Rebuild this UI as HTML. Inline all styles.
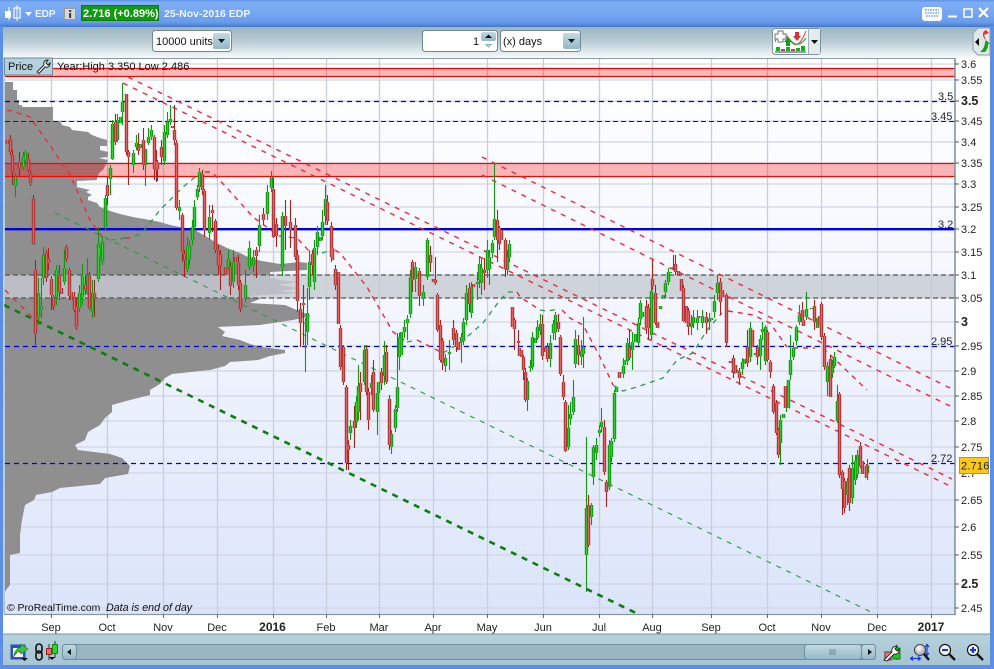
<!DOCTYPE html>
<html><head><meta charset="utf-8"><title>EDP</title>
<style>
html,body{margin:0;padding:0;background:#5b8fe6;overflow:hidden}
svg{display:block;font-family:"Liberation Sans",Arial,sans-serif}
</style></head><body>
<svg xmlns="http://www.w3.org/2000/svg" width="994" height="669" viewBox="0 0 994 669">
<defs>
<linearGradient id="tb" x1="0" y1="0" x2="0" y2="1"><stop offset="0" stop-color="#5f92e6"/><stop offset=".1" stop-color="#7fb0f6"/><stop offset=".85" stop-color="#6a9cec"/><stop offset="1" stop-color="#4d7fd2"/></linearGradient>
<linearGradient id="tool" x1="0" y1="0" x2="0" y2="1"><stop offset="0" stop-color="#98b3bf"/><stop offset=".5" stop-color="#bccdd5"/><stop offset="1" stop-color="#f8fafb"/></linearGradient>
<linearGradient id="bg" x1="0" y1="0" x2="0" y2="1"><stop offset="0" stop-color="#ffffff"/><stop offset=".45" stop-color="#f3f6fe"/><stop offset="1" stop-color="#dbe4fa"/></linearGradient>
<linearGradient id="bot" x1="0" y1="0" x2="0" y2="1"><stop offset="0" stop-color="#b5d1dc"/><stop offset="1" stop-color="#a6c5d2"/></linearGradient>
<linearGradient id="btn" x1="0" y1="0" x2="0" y2="1"><stop offset="0" stop-color="#c2d9e2"/><stop offset="1" stop-color="#94b8c7"/></linearGradient>
<radialGradient id="lens" cx=".4" cy=".35" r=".7"><stop offset="0" stop-color="#fff"/><stop offset="1" stop-color="#999"/></radialGradient>
<path id="gb" d="M15 177V186M23 157V167M25 152V160M38 293V318M41 307V310M43 255V278M56 270V297M64 268V282M79 293V308M82 276V297M87 276V293M92 293V312M98 244V279M99 248V255M102 242V262M105 198V227M110 168V179M112 124V159M117 120V140M120 117V123M122 102V112M133 153V165M136 143V147M140 144V148M145 149V165M148 137V143M151 130V137M164 132V161M167 122V135M170 119V122M179 207V211M187 246V269M189 245V259M192 227V240M194 207V227M197 189V197M199 172V187M209 217V233M228 259V267M233 262V282M245 285V298M249 248V267M253 257V265M259 225V246M267 192V214M271 177V188M282 216V267M305 323V324M307 313V332M309 262V287M314 248V282M317 232V247M320 237V241M322 222V236M325 199V216M350 426V433M356 402V422M358 386V412M364 350V382M371 383V388M377 393V412M378 382V393M384 355V376M391 434V447M395 409V428M397 387V408M399 337V357M401 332V355M404 327V332M407 319V323M410 277V314M415 267V279M423 292V298M427 240V277M445 358V366M449 352V354M461 337V342M463 322V341M466 293V320M471 287V313M477 282V284M479 264V280M481 268V283M487 250V270M489 257V269M492 243V253M494 219V237M507 257V270M509 244V257M527 381V400M530 366V368M532 337V367M535 338V343M537 327V338M540 324V331M550 343V359M553 324V333M555 315V332M568 428V447M570 414V419M573 397V412M575 339V364M581 351V357M583 347V354M586 508V555M591 505V517M593 447V477M596 445V453M599 430V433M601 422V427M609 445V487M611 441V457M614 393V439M616 387V392M623 366V374M624 360V365M627 343V361M632 342V350M635 334V342M638 323V343M640 303V319M642 312V317M651 291V335M660 306V309M663 295V298M665 283V292M668 272V282M670 272V273M691 323V327M693 317V323M697 318V323M702 316V323M709 319V322M711 318V320M714 301V312M717 283V293M738 370V372M742 362V369M744 359V364M750 328V357M755 353V355M760 339V356M762 329V332M765 327V361M780 420V443M783 414V418M786 394V406M788 380V408M790 360V375M793 348V357M796 327V341M799 315V322M806 309V317M811 308V309M817 318V328M827 366V382M832 366V373M834 357V366M837 401V421M847 481V495M852 468V498M855 461V480M857 455V474M867 465V473"/>
<path id="rb" d="M7 140V144M10 139V152M12 155V171M19 162V169M28 159V169M30 174V183M33 199V244M35 270V334M46 253V278M48 259V263M51 279V295M53 297V307M59 275V292M61 288V294M66 247V259M69 270V296M71 292V300M74 297V310M76 307V327M85 285V290M89 275V308M94 293V298M107 185V196M115 122V142M126 94V152M128 152V157M138 146V151M143 140V165M154 137V169M156 161V170M157 163V169M161 147V157M172 126V128M174 130V140M176 143V208M182 215V252M184 254V260M202 174V190M204 191V230M212 210V213M215 221V250M218 250V265M220 255V266M225 267V275M230 267V286M235 257V262M238 263V285M240 283V309M256 250V256M263 214V220M273 189V237M276 224V236M285 216V226M290 222V230M295 225V257M297 255V301M300 309V323M303 303V305M312 254V265M327 202V221M331 226V257M332 248V260M335 269V285M338 272V324M340 328V367M343 347V382M346 387V463M348 445V450M354 421V428M360 383V392M366 349V392M368 392V420M373 372V410M381 372V383M386 352V382M389 399V445M412 262V280M419 271V296M430 255V263M433 279V282M435 280V283M437 295V330M440 325V360M442 341V363M453 328V340M456 333V347M458 342V350M469 288V304M473 284V287M484 270V273M497 220V240M499 228V244M501 230V240M505 240V269M512 307V327M514 320V329M518 341V343M519 348V356M521 350V357M523 357V370M525 372V400M542 324V356M545 347V352M547 347V359M558 322V329M560 337V374M563 382V397M565 402V451M578 345V355M588 505V545M604 427V472M606 482V492M619 372V378M629 347V358M646 306V328M648 308V328M652 279V286M655 293V323M657 322V328M673 267V268M675 264V272M678 271V276M681 279V291M683 288V321M686 306V323M688 311V327M698 316V318M706 317V323M720 282V302M722 290V297M726 295V343M730 361V363M733 358V372M735 365V373M739 372V378M747 347V363M752 330V347M757 347V357M767 332V360M770 362V372M773 386V412M776 403V433M778 430V455M785 386V408M802 310V322M803 320V326M814 306V322M819 316V325M821 304V337M824 336V367M830 359V397M839 394V475M842 472V489M844 481V508M849 468V503M860 446V466M862 461V474M866 466V478"/>
</defs>

<!-- frame -->
<rect width="994" height="669" fill="#5b8fe6"/>
<rect x="0" y="0" width="994" height="26" fill="url(#tb)"/>
<rect x="3" y="26" width="987" height="32" fill="url(#tool)"/>
<rect x="3" y="58" width="987" height="576" fill="#fff"/>
<rect x="3" y="634" width="987" height="31" fill="url(#bot)"/>
<rect x="3" y="633.5" width="987" height="1" fill="#7d95a0"/>
<rect x="3" y="26" width="987" height="1" fill="#4577cc"/>

<!-- chart bg -->
<rect x="4" y="58" width="951" height="556" fill="url(#bg)"/>
<!-- grid -->
<path d="M4 64H955M4 80H955M4 101H955M4 121H955M4 142H955M4 163H955M4 184H955M4 207H955M4 229H955M4 252H955M4 275H955M4 298H955M4 322H955M4 346H955M4 371H955M4 396H955M4 421H955M4 447H955M4 473H955M4 500H955M4 527H955M4 555H955M4 584H955M4 608H955" stroke="#d2d6e2" stroke-width="1.3" fill="none"/>
<path d="M51.5 58V614M107.5 58V614M163.5 58V614M217.5 58V614M273.5 58V614M326.5 58V614M379.5 58V614M433.5 58V614M487.5 58V614M543.5 58V614M599.5 58V614M652.5 58V614M711.5 58V614M767.5 58V614M821.5 58V614M877.5 58V614M931.5 58V614" stroke="#c9cedb" stroke-width="1.3" fill="none"/>

<!-- volume profile -->
<polygon fill="#8f8f8f" points="5,82 13,82 13,90 17,90 17,100 19,100 19,105 22,105 22,107 53,107 53,121 60,121 62,125 70,127 72,130 88,132 92,135 100,138 107,140 107,146 100,146 100,150 108,152 108,157 99,158 108,160 103,170 100,172 97,177 97,180 77,181 77,187 90,190 86,192 92,195 88,197 88,200 97,203 100,207 107,210 120,214 133,217 150,220 160,222 170,225 180,227 195,230 207,237 215,242 227,248 240,253 250,258 262,261 280,264 300,262 307,263 307,270 270,272 270,278 280,280 297,282 278,285 300,288 280,291 300,293 250,296 262,298 250,303 285,305 311,316 293,320 260,325 218,327 225,332 222,336 240,340 250,344 262,347 285,350 285,353 270,356 258,360 230,362 225,366 210,370 172,374 165,378 160,384 150,390 150,395 130,400 112,405 112,412 105,418 100,425 88,432 85,440 75,445 78,450 110,454 122,458 130,466 128,474 105,478 100,484 60,488 52,492 36,495 34,500 25,505 22,520 20,535 20,553 10,555 10,585 6,590 5,592"/>

<!-- bands -->
<rect x="5" y="275" width="950" height="23" fill="#c6cad2" fill-opacity=".8"/>
<path d="M5 275H955M5 298H955" stroke="#555" stroke-width="1.2" stroke-dasharray="5 3" fill="none"/>
<path d="M5 121.5H955" stroke="#222" stroke-width="1" stroke-dasharray="5 3" fill="none"/>
<rect x="5" y="68" width="950" height="8" fill="#ff0000" fill-opacity=".28"/>
<rect x="5" y="163" width="950" height="13" fill="#ff0000" fill-opacity=".28"/>
<path d="M5 68.5H955M5 76.5H955M5 163.5H955M5 176.5H955" stroke="#f00" stroke-width="1.2" fill="none"/>
<path d="M5 101.5H955M5 346.5H955M5 463.5H955" stroke="#0000e6" stroke-width="1.2" stroke-dasharray="5 4" fill="none"/>
<rect x="5" y="228" width="950" height="2.4" fill="#0000e6"/>

<!-- trend lines -->
<path d="M4 305L638 614" stroke="#0a800a" stroke-width="2.6" stroke-dasharray="6 6" fill="none"/>
<path d="M55 213L875 614" stroke="#2a9a3a" stroke-width="1.1" stroke-dasharray="5 6" fill="none"/>
<path d="M128 77L952 479M123 83L952 487M482 157L952 389M482 175L952 407M5 290L33 318" stroke="#f0283a" stroke-width="1.4" stroke-dasharray="5 6" fill="none"/>
<!-- moving average -->
<path d="M7 110L15 112L30 117L53 150L70 175L90 220L103 238L108 240M125 238L132 238M205 172L212 172L227 188L253 217L279 236L297 238L310 252M335 250L340 253L367 287L393 332L407 342M417 340L443 353M517 292L520 297L540 310M562 310L570 318L583 325L600 357L613 385M728 311L753 315L770 323L787 347M793 348L815 348M823 348L867 390" stroke="#f0283a" stroke-width="1.4" stroke-dasharray="5 5" fill="none"/>
<path d="M110 240L125 238M135 236L142 233L160 210L183 187L200 173M322 253L332 250M407 342L417 340M443 353L460 343L483 323L500 300L508 292L517 292M540 310L547 311L560 309M613 385L623 391L640 386L663 378L677 360L693 353L707 330L722 313" stroke="#2a9a50" stroke-width="1.3" stroke-dasharray="5 5" fill="none"/>

<!-- candles -->
<g transform="translate(.5 0)" fill="none">
<path stroke="#0f970f" stroke-width="1.1" d="M15 173V197M23 152V170M25 150V163M38 278V325M41 278V318M43 247V285M56 265V305M64 250V285M79 285V312M82 264V305M87 258V295M92 280V318M98 227V282M102 236V265M105 195V230M110 165V195M112 120V160M117 114V142M122 83V125M133 150V173M136 135V150M145 149V186M148 128V145M151 125V140M164 125V165M167 112V138M170 105V125M179 200V220M187 237V272M189 240V265M192 220V245M194 200V230M197 185V200M199 168V192M209 205V240M228 250V270M233 250V288M245 270V302M249 241V270M253 250V272M259 215V252M267 185V220M271 171V192M282 212V276M305 318V372M307 288V345M309 250V300M314 240V290M317 226V255M322 210V240M325 185V225M350 420V440M356 396V428M358 365V420M364 345V385M371 375V395M377 385V435M384 341V385M391 430V454M395 405V432M397 333V412M399 333V370M404 320V338M407 315V340M410 270V318M415 262V292M423 285V306M427 238V280M445 354V372M449 340V370M461 333V363M463 318V345M466 285V325M471 282V318M477 272V300M479 256V288M481 258V295M487 240V278M489 250V285M492 240V258M494 164V240M507 250V275M509 240V262M527 378V411M530 360V372M532 332V370M537 320V340M540 314V335M550 335V367M553 320V340M555 312V340M568 405V450M570 402V425M573 380V415M575 330V368M581 340V365M583 317V368M586 437V592M591 503V525M593 445V485M596 438V460M599 425V437M601 408V432M609 440V490M611 438V462M614 390V442M623 358V378M627 338V365M632 332V370M638 318V346M640 300V325M651 285V340M665 280V298M668 268V285M691 315V335M693 310V328M697 310V330M702 310V328M709 313V330M714 295V318M717 275V300M742 358V375M750 322V362M760 335V370M762 322V340M765 325V365M780 415V465M786 390V412M790 335V380M793 342V360M796 325V345M799 305V325M806 292V320M827 362V396M832 360V378M834 352V368M837 385V423M847 478V505M852 455V504M855 455V485M857 450V478M867 459V480"/>
<path stroke="#a82020" stroke-width="1.1" d="M10 135V155M12 150V185M19 152V177M28 153V172M30 170V186M33 195V245M35 260V345M46 250V282M48 248V270M51 276V310M53 295V310M59 265V300M66 245V262M69 268V300M74 292V312M76 297V330M85 275V295M89 272V310M94 280V317M107 177V205M115 114V145M126 94V155M128 150V185M138 133V155M143 128V170M154 135V180M156 150V182M157 160V181M161 140V165M174 105V145M176 140V210M182 213V262M184 250V277M202 170V195M204 189V237M212 205V232M215 219V253M218 245V275M220 250V290M230 262V295M238 255V290M240 280V312M256 247V278M263 208V225M273 178V238M276 218V247M285 200V250M290 200V248M295 218V260M297 250V312M300 303V347M303 285V345M312 250V275M327 195V225M331 222V262M335 265V290M340 325V370M343 345V385M346 385V470M348 440V470M354 406V448M360 372V420M366 345V395M368 388V430M373 360V412M381 368V390M386 345V384M389 395V450M412 260V292M419 268V306M430 246V272M435 257V285M437 293V332M440 320V362M442 338V370M453 320V345M456 330V352M469 283V312M484 258V290M497 210V262M499 226V250M505 238V277M514 318V350M518 330V352M523 355V380M525 368V402M542 315V360M547 343V362M558 314V332M560 335V376M563 375V400M565 400V452M578 335V365M588 495V547M604 420V475M606 480V507M629 330V360M646 300V334M648 304V340M652 260V290M655 285V325M673 255V270M675 255V275M683 285V322M688 308V335M706 312V334M720 278V315M726 293V347M733 355V378M739 368V385M747 330V367M757 345V365M767 330V362M770 360V378M773 384V414M776 400V435M778 428V458M802 302V326M814 300V330M821 302V340M824 333V370M830 355V397M839 392V478M842 470V515M844 478V513M849 465V511M860 442V468M866 464V478"/>
<use href="#gb" stroke="#0d8c0d" stroke-width="3.4"/>
<use href="#gb" stroke="#2ed02e" stroke-width="1.5"/>
<use href="#rb" stroke="#a52a2a" stroke-width="3.4"/>
<use href="#rb" stroke="#de6464" stroke-width="1.5"/>
</g>

<!-- axes -->
<path d="M4 614.5H956" stroke="#8a9aa5" stroke-width="1.2"/>
<path d="M955 58V615" stroke="#7d8f9a" stroke-width="1.5"/>
<path d="M4 58V614" stroke="#8aa0b0" stroke-width="1"/>
<path d="M3 58.5H956" stroke="#8a9aa5" stroke-width="1"/>
<path d="M955 64H959M955 80H959M955 101H959M955 121H959M955 142H959M955 163H959M955 184H959M955 207H959M955 229H959M955 252H959M955 275H959M955 298H959M955 322H959M955 346H959M955 371H959M955 396H959M955 421H959M955 447H959M955 500H959M955 527H959M955 555H959M955 584H959M955 608H959" stroke="#555" stroke-width="1"/>
<path d="M51.5 614V618M107.5 614V618M163.5 614V618M217.5 614V618M273.5 614V618M326.5 614V618M379.5 614V618M433.5 614V618M487.5 614V618M543.5 614V618M599.5 614V618M652.5 614V618M711.5 614V618M767.5 614V618M821.5 614V618M877.5 614V618M931.5 614V618" stroke="#666" stroke-width="1"/>

<!-- y labels -->
<g font-size="11" fill="#222">
<text x="961" y="68">3.6</text><text x="961" y="84">3.55</text>
<text x="961" y="125">3.45</text><text x="961" y="146">3.4</text><text x="961" y="167">3.35</text><text x="961" y="188">3.3</text><text x="961" y="211">3.25</text><text x="961" y="233">3.2</text><text x="961" y="256">3.15</text><text x="961" y="279">3.1</text><text x="961" y="302">3.05</text>
<text x="961" y="350">2.95</text><text x="961" y="375">2.9</text><text x="961" y="400">2.85</text><text x="961" y="425">2.8</text><text x="961" y="451">2.75</text><text x="961" y="477">2.7</text><text x="961" y="504">2.65</text><text x="961" y="531">2.6</text><text x="961" y="559">2.55</text><text x="961" y="612">2.45</text>
<text x="938" y="100">3.5</text><text x="931" y="120">3.45</text><text x="938" y="228">3.2</text><text x="931" y="345">2.95</text><text x="931" y="462">2.72</text>
</g>
<g font-size="12.5" font-weight="bold" fill="#222">
<text x="961" y="105">3.5</text><text x="961" y="326">3</text><text x="961" y="588">2.5</text>
</g>
<rect x="959.500" y="457.500" width="29" height="16" fill="#fdc81a" stroke="#8a97a0"/>
<text x="961" y="469.500" font-size="11" letter-spacing=".2" fill="#222">2.716</text>

<!-- x labels -->
<g font-size="11" fill="#222" text-anchor="middle">
<text x="51" y="631">Sep</text><text x="107" y="631">Oct</text><text x="163" y="631">Nov</text><text x="217" y="631">Dec</text><text x="326" y="631">Feb</text><text x="379" y="631">Mar</text><text x="433" y="631">Apr</text><text x="487" y="631">May</text><text x="543" y="631">Jun</text><text x="599" y="631">Jul</text><text x="652" y="631">Aug</text><text x="711" y="631">Sep</text><text x="767" y="631">Oct</text><text x="821" y="631">Nov</text><text x="877" y="631">Dec</text>
<text x="272.5" y="631" font-weight="bold" font-size="12">2016</text><text x="931" y="631" font-weight="bold" font-size="12">2017</text>
</g>

<!-- chart overlays -->
<rect x="4.5" y="58" width="48" height="17" fill="#b4d2de" stroke="#6d8b98"/>
<text x="8" y="70" font-size="11" fill="#111">Price</text>
<path d="M37 72L44 65C43 62 45 60 48 60L46 63L48 65L50 63C50 66 48 68 45 67L39 73.5Z" fill="#fff" stroke="#222" stroke-width="1"/>
<text x="57" y="70" font-size="11" fill="#111">Year:High 3.350 Low 2.486</text>
<text x="7" y="611" font-size="10.4" fill="#111">© ProRealTime.com</text>
<text x="106" y="611" font-size="10.7" font-style="italic" fill="#111">Data is end of day</text>

<!-- title bar -->
<path d="M9 7V20M17 5V21" stroke="#fff" stroke-width="1"/>
<rect x="5" y="11" width="6" height="7" fill="#fff"/>
<rect x="14" y="8" width="6" height="10" fill="none" stroke="#fff" stroke-width="1.2"/>
<path d="M25 12H32L28.5 16Z" fill="#fff"/>
<text x="35" y="17" font-size="10" font-weight="bold" fill="#eef4ff">EDP</text>
<rect x="64.5" y="8.5" width="11" height="11" fill="#d8d8d8" stroke="#9a9a9a"/>
<rect x="69" y="10" width="2.2" height="2" fill="#444"/><rect x="69" y="13" width="2.2" height="5" fill="#444"/>
<rect x="81.5" y="5.5" width="77" height="15" fill="#0f9a0f" stroke="#0c7a0c"/>
<text x="83" y="17" font-size="11" font-weight="bold" fill="#fff">2.716 (+0.89%)</text>
<text x="164" y="17" font-size="10.5" font-weight="bold" fill="#eef4ff">25-Nov-2016 EDP</text>

<rect x="922" y="7" width="20" height="14" rx="3" fill="#fff"/>
<path d="M925 10H939M925 13H939M926 16H938" stroke="#6f9fec" stroke-width="1.6" stroke-dasharray="1.6 1"/>
<path d="M948 16.5H957" stroke="#fff" stroke-width="2"/>
<rect x="964" y="9" width="8" height="8" fill="none" stroke="#fff" stroke-width="1.5"/>
<path d="M979 8L988 17M988 8L979 17" stroke="#fff" stroke-width="2.2"/>

<!-- toolbar controls -->
<rect x="152.5" y="30.5" width="79" height="21" rx="3" fill="#fff" stroke="#6c8a96"/>
<text x="156" y="45" font-size="11" fill="#111">10000 units</text>
<rect x="213" y="33" width="17" height="16" rx="2" fill="url(#btn)"/>
<path d="M218 39H225L221.5 43Z" fill="#111"/>

<rect x="422.5" y="30.5" width="75" height="21" rx="3" fill="#fff" stroke="#6c8a96"/>
<text x="473" y="45" font-size="11" fill="#111">1</text>
<rect x="481" y="32" width="15" height="9" rx="2" fill="url(#btn)"/>
<path d="M485 38H492L488.5 34.5Z" fill="#111"/>
<path d="M486 44.5H491L488.5 47Z" fill="none" stroke="#8aa4b0"/>
<rect x="500.5" y="30.5" width="80" height="21" rx="3" fill="#fff" stroke="#6c8a96"/>
<text x="503" y="45" font-size="11" fill="#111">(x) days</text>
<rect x="563" y="33" width="17" height="16" rx="2" fill="url(#btn)"/>
<path d="M568 39H575L571.5 43Z" fill="#111"/>

<rect x="772.5" y="28.5" width="48" height="26" rx="3" fill="#fff" stroke="#7d939e"/>
<path d="M808.5 28.5V54.5" stroke="#9db0b8"/>
<rect x="809" y="29" width="11" height="25" fill="#e4ebee"/>
<path d="M811 40H818L814.5 44Z" fill="#111"/>
<path d="M775 52H806" stroke="#2233aa" stroke-width="1"/>
<path d="M776 51V47H780V51ZM786 51V47H790V51ZM796 51V48H800V51ZM801 51V46H805V51Z" fill="#17b017"/>
<path d="M781 51V49H785V51ZM791 51V49H795V51Z" fill="#d04040"/>
<path d="M775 42C779 30 785 32 790 40S800 46 806 31" fill="none" stroke="#d85a5a" stroke-width="1.2"/>
<path d="M775 36C781 33 786 36 790 40S799 48 806 38" fill="none" stroke="#2aa84a" stroke-width="1.2"/>
<path d="M786 46V42H784L788 37L792 42H790V46Z" fill="#12a012"/>
<path d="M795 32V36H793L797 41L801 36H799V32Z" fill="#e03030"/>
<path d="M778 31H783V34H786V39H783V42H778V39H775V34H778Z" fill="#fff" stroke="#888" stroke-width="1.2"/>

<path d="M990 28H978L973 33V50L978 55H990Z" fill="#dfe7ea" stroke="#8aa0aa"/>
<path d="M975 42L979 38V46Z" fill="#111"/>
<path d="M986 30C981 32 983 38 986 40L984 35L989 33Z" fill="#e03a3a"/>
<path d="M985 42C985 46 983 50 980 52L985 52C988 49 988 46 988 44L990 44L986 40Z" fill="#15a015"/>

<!-- bottom toolbar -->
<rect x="11" y="645" width="14" height="14" fill="#2255cc" stroke="#2255bb"/>
<rect x="13" y="648" width="10" height="9" fill="#fff"/>
<path d="M13 657L18 651L22 654" stroke="#e03030" fill="none"/>
<path d="M14 655C15 650 18 648 21 647V644L28 649L21 654V651C18 651 16 653 14 655Z" fill="#3cc43c" stroke="#1c8c1c" stroke-width=".7"/>
<path d="M21 658H28L24.5 661Z" fill="#111"/>
<rect x="36" y="644" width="6" height="9" rx="3" fill="none" stroke="#111" stroke-width="1.6"/>
<rect x="36" y="651" width="6" height="9" rx="3" fill="none" stroke="#111" stroke-width="1.6"/>
<path d="M49 644V660M55 641V658" stroke="#333" stroke-width="1"/>
<rect x="46.5" y="648.5" width="5" height="6" fill="#e07070" stroke="#a82020"/>
<rect x="52.5" y="644.5" width="5" height="9" fill="#35d035" stroke="#0d8c0d"/>
<path d="M49 657H55L52 660Z" fill="#111"/>

<rect x="62.5" y="644.5" width="813" height="15" rx="3" fill="#9ab6c2" stroke="#6f8f9c"/>
<rect x="62.5" y="644.5" width="14" height="15" rx="3" fill="url(#btn)" stroke="#6f8f9c"/>
<path d="M71 649V655L67 652Z" fill="#111"/>
<rect x="804.5" y="644.5" width="57" height="15" rx="3" fill="url(#btn)" stroke="#6f8f9c"/>
<path d="M829 650H836M829 652H836M829 654H836" stroke="#6f8a96"/>
<rect x="861.5" y="644.5" width="14" height="15" rx="3" fill="url(#btn)" stroke="#6f8f9c"/>
<path d="M868 649V655L872 652Z" fill="#111"/>

<path d="M897 645V660" stroke="#333"/>
<rect x="893" y="648" width="7" height="11" fill="#2fc02f" stroke="#0d7a0d"/>
<rect x="885" y="652" width="6" height="8" fill="#e08080" stroke="#8c2020"/>
<path d="M884 660L892 652C891 649 893 646 897 646L895 649L897 651L899 649C899 653 897 655 894 654L887 661Z" fill="#fff" stroke="#222" stroke-width=".9"/>
<circle cx="920" cy="650" r="5.5" fill="url(#lens)" stroke="#222" stroke-width=".8"/>
<path d="M924 654L929 660" stroke="#111" stroke-width="2.4"/>
<path d="M927 645V655M925 647L927 644.5L929 647M925 653L927 655.5L929 653M911 658.5H920M913 656.5L910.5 658.5L913 660.5M918 656.5L920.5 658.5L918 660.5" stroke="#1a35e0" stroke-width="1.2" fill="none"/>
<circle cx="945" cy="650" r="5.5" fill="#fff" stroke="#111" stroke-width="1.2"/>
<path d="M942 650H948" stroke="#1a35e0" stroke-width="2.2"/>
<path d="M949 654L955 660" stroke="#111" stroke-width="2.4"/>
<circle cx="973" cy="650" r="5.5" fill="#fff" stroke="#111" stroke-width="1.2"/>
<path d="M970 650H976M973 647V653" stroke="#1a35e0" stroke-width="2.2"/>
<path d="M977 654L983 660" stroke="#111" stroke-width="2.4"/>
</svg>
</body></html>
